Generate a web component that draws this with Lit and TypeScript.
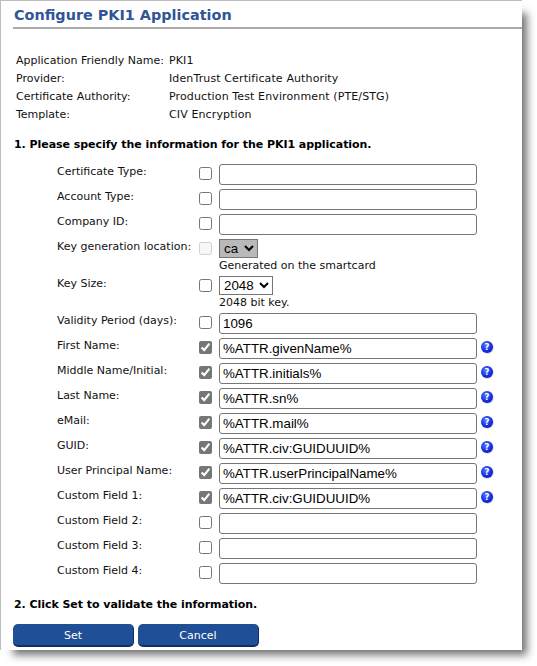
import { LitElement, html, css } from "lit";
import { customElement } from "lit/decorators.js";

type Row = {
  label: string;
  kind?: "text" | "select";
  value?: string;
  checked?: boolean;
  help?: boolean;
  options?: string[];
  note?: string;
  locked?: boolean;
};

const info = [
  ["Application Friendly Name:", "PKI1"],
  ["Provider:", "IdenTrust Certificate Authority"],
  ["Certificate Authority:", "Production Test Environment (PTE/STG)"],
  ["Template:", "CIV Encryption"],
];

const rows: Row[] = [
  { label: "Certificate Type:" },
  { label: "Account Type:" },
  { label: "Company ID:" },
  { label: "Key generation location:", kind: "select", options: ["ca"], note: "Generated on the smartcard", locked: true },
  { label: "Key Size:", kind: "select", options: ["2048"], note: "2048 bit key." },
  { label: "Validity Period (days):", value: "1096" },
  { label: "First Name:", value: "%ATTR.givenName%", checked: true, help: true },
  { label: "Middle Name/Initial:", value: "%ATTR.initials%", checked: true, help: true },
  { label: "Last Name:", value: "%ATTR.sn%", checked: true, help: true },
  { label: "eMail:", value: "%ATTR.mail%", checked: true, help: true },
  { label: "GUID:", value: "%ATTR.civ:GUIDUUID%", checked: true, help: true },
  { label: "User Principal Name:", value: "%ATTR.userPrincipalName%", checked: true, help: true },
  { label: "Custom Field 1:", value: "%ATTR.civ:GUIDUUID%", checked: true, help: true },
  { label: "Custom Field 2:" },
  { label: "Custom Field 3:" },
  { label: "Custom Field 4:" },
];

@customElement("app-root")
export class AppRoot extends LitElement {
  static styles = css`
    :host {
      display: block;
      width: 537px;
      height: 666px;
      background: #fff;
      font-family: "DejaVu Sans", Verdana, sans-serif;
      font-size: 11px;
      color: #111;
      overflow: hidden;
    }
    .window {
      box-sizing: border-box;
      width: 522px;
      height: 650px;
      background: #fff;
      border-left: 1px solid #bdbdbd;
      border-top: 1px solid #bdbdbd;
      box-shadow: 9px 9px 8px -4px rgba(0, 0, 0, 0.55);
      padding: 5px 0 0 12px;
      display: flex;
      flex-direction: column;
    }
    h1 {
      margin: 0 0 0 1px;
      height: 20px;
      line-height: 19px;
      font-size: 14.4px;
      font-weight: bold;
      color: #2f5597;
      white-space: nowrap;
    }
    .rule {
      height: 2px;
      background: #a9a9a9;
      margin-top: 1px;
    }
    .info {
      margin: 23px 0 0 3px;
      display: grid;
      grid-template-columns: 153px 1fr;
      grid-auto-rows: 18px;
      line-height: 18px;
      letter-spacing: 0.12px;
    }
    .info .key {
      letter-spacing: 0;
    }
    h2 {
      margin: 13px 0 0 1px;
      height: 16px;
      line-height: 16px;
      font-size: 11px;
      font-weight: bold;
      letter-spacing: -0.05px;
      color: #000;
    }
    .form {
      margin: 11px 0 0 44px;
      display: flex;
      flex-direction: column;
      gap: 4px;
    }
    .row {
      display: grid;
      grid-template-columns: 142px 20px 258px 16px;
      align-items: start;
      min-height: 21px;
    }
    .lbl {
      line-height: 14px;
      margin-top: 1px;
      white-space: nowrap;
    }
    .check {
      width: 13px;
      height: 13px;
      margin: 3px 0 0 0;
      accent-color: #767676;
    }
    .field {
      box-sizing: border-box;
      width: 258px;
      height: 21px;
      margin: 0;
      padding: 1px 3px;
      border: 1px solid #767676;
      border-radius: 3px;
      background: #fff;
      font-family: "Liberation Sans", Arial, sans-serif;
      font-size: 13.33px;
      color: #000;
    }
    select {
      display: block;
      height: 19px;
      margin: 0;
      padding-right: 2px;
      border: 1px solid #767676;
      border-radius: 0;
      background: #fff;
      font-family: "Liberation Sans", Arial, sans-serif;
      font-size: 13.33px;
      color: #000;
    }
    select.locked {
      background: #b9b9b9;
    }
    .note {
      height: 13px;
      line-height: 14px;
      margin-top: 1px;
    }
    .help {
      display: block;
      width: 14px;
      height: 14px;
      margin: 2px 0 0 3px;
    }
    .help text {
      font-family: "DejaVu Sans", sans-serif;
      font-size: 8.5px;
      font-weight: bold;
      fill: #fff;
    }
    .step2 {
      margin-top: 13px;
    }
    .actions {
      margin: 11px 0 0 0;
      display: flex;
      gap: 4px;
    }
    button {
      box-sizing: border-box;
      height: 23px;
      padding: 1px 0 0;
      border: 0;
      border-right: 1px solid #12305f;
      border-bottom: 2px solid #12305f;
      border-radius: 5px;
      background: #1f4f96;
      color: #fff;
      font-family: "DejaVu Sans", sans-serif;
      font-size: 11px;
    }
    .set {
      width: 121px;
    }
    .cancel {
      width: 121px;
    }
  `;

  private helpIcon(id: number) {
    return html`<svg class="help" viewBox="0 0 14 14" aria-label="help">
      <defs>
        <radialGradient id="g${id}" cx="40%" cy="35%" r="70%">
          <stop offset="0" stop-color="#4a7dff" />
          <stop offset="0.65" stop-color="#1a2fe0" />
          <stop offset="1" stop-color="#1020b0" />
        </radialGradient>
      </defs>
      <circle cx="7.5" cy="7.5" r="6.2" fill="#c9cdf5" />
      <circle cx="7" cy="7" r="6" fill="url(#g${id})" />
      <text x="7" y="10.2" text-anchor="middle">?</text>
    </svg>`;
  }

  private control(r: Row) {
    if (r.kind === "select") {
      return html`<div>
        <select class=${r.locked ? "locked" : ""}>
          ${(r.options ?? []).map((o) => html`<option>${o}</option>`)}
        </select>
        <div class="note">${r.note}</div>
      </div>`;
    }
    return html`<input class="field" type="text" .value=${r.value ?? ""} />`;
  }

  render() {
    return html`<div class="window">
      <h1>Configure PKI1 Application</h1>
      <div class="rule"></div>
      <div class="info">
        ${info.map(([k, v]) => html`<div class="key">${k}</div><div>${v}</div>`)}
      </div>
      <h2>1. Please specify the information for the PKI1 application.</h2>
      <div class="form">
        ${rows.map(
          (r, i) => html`<div class="row">
            <div class="lbl">${r.label}</div>
            <input class="check" type="checkbox" ?checked=${!!r.checked} ?disabled=${!!r.locked} />
            ${this.control(r)}
            ${r.help ? this.helpIcon(i) : html`<span></span>`}
          </div>`
        )}
      </div>
      <h2 class="step2">2. Click Set to validate the information.</h2>
      <div class="actions">
        <button class="set">Set</button>
        <button class="cancel">Cancel</button>
      </div>
    </div>`;
  }
}
